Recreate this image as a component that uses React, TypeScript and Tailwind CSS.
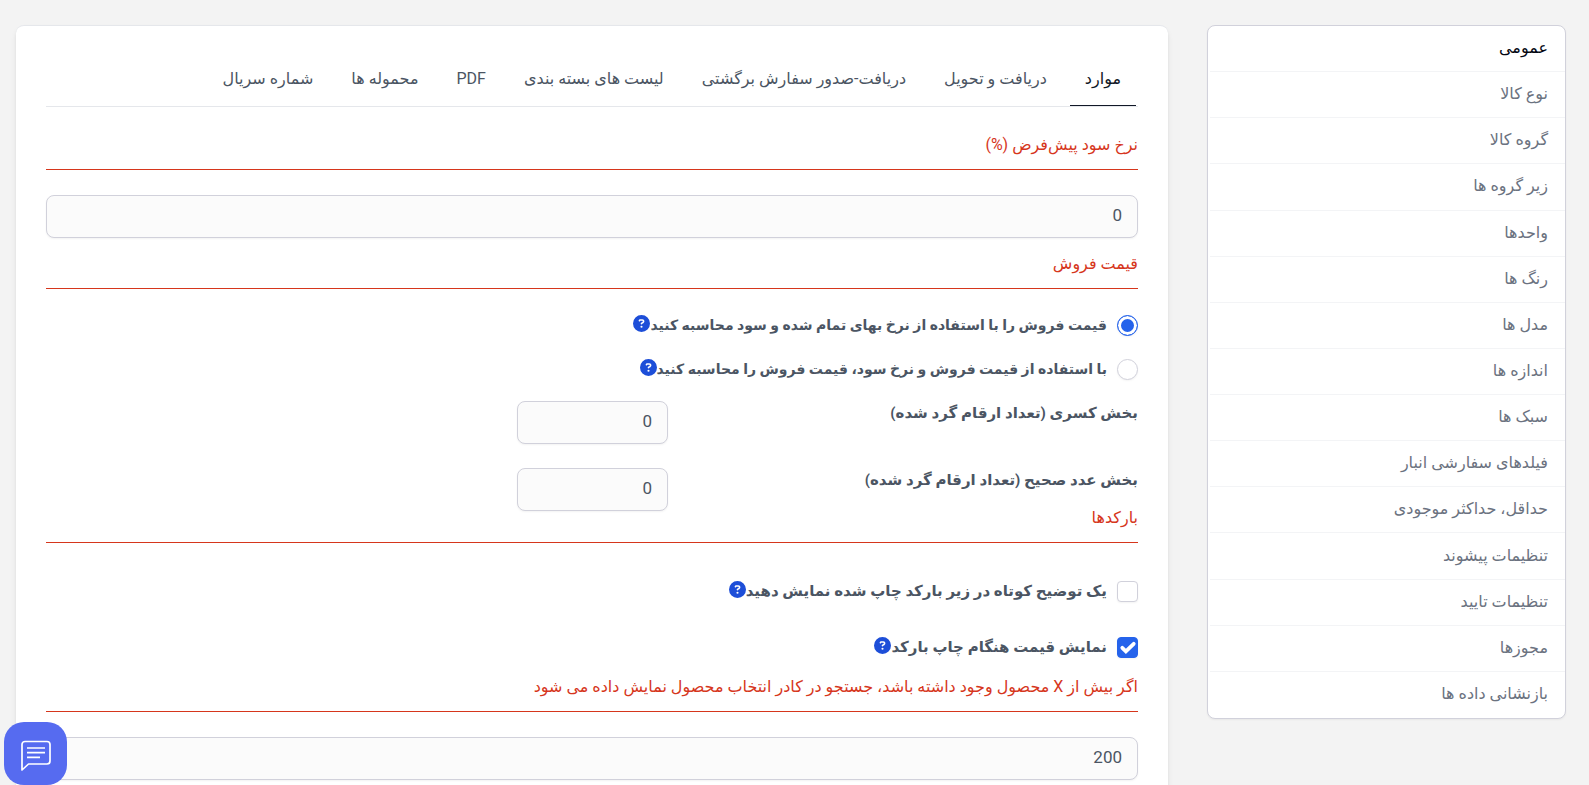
import { useState } from 'react';
import { FaCircleQuestion } from 'react-icons/fa6';

const sideItems = [
  'عمومی',
  'نوع کالا',
  'گروه کالا',
  'زیر گروه ها',
  'واحدها',
  'رنگ ها',
  'مدل ها',
  'اندازه ها',
  'سبک ها',
  'فیلدهای سفارشی انبار',
  'حداقل، حداکثر موجودی',
  'تنظیمات پیشوند',
  'تنظیمات تایید',
  'مجوزها',
  'بازنشانی داده ها',
];

const tabs = [
  'موارد',
  'دریافت و تحویل',
  'دریافت-صدور سفارش برگشتی',
  'لیست های بسته بندی',
  'PDF',
  'محموله ها',
  'شماره سریال',
];

const methods = [
  { id: 'cost', label: 'قیمت فروش را با استفاده از نرخ بهای تمام شده و سود محاسبه کنید' },
  { id: 'price', label: 'با استفاده از قیمت فروش و نرخ سود، قیمت فروش را محاسبه کنید' },
];

const inputClass =
  'block h-[43px] rounded-lg border border-[#d1d1db] bg-[#fbfbfb] px-[15px] pb-1 text-[17px] text-[#4b5563] shadow-xs outline-none';

function SectionTitle({ children }: { children: React.ReactNode }) {
  return (
    <h2 className="border-b border-[#d6361c] pb-3 text-base leading-6 text-[#d6361c]">
      {children}
    </h2>
  );
}

function Help() {
  return (
    <button type="button" aria-label="راهنما" className="mb-1 text-[#1d4ed8]">
      <FaCircleQuestion size={17} />
    </button>
  );
}

type CheckRowProps = {
  id: string;
  label: string;
  checked: boolean;
  onChange: (value: boolean) => void;
};

function CheckRow({ id, label, checked, onChange }: CheckRowProps) {
  return (
    <div className="flex items-center">
      <span className="relative ml-[10px] flex">
        <input
          id={id}
          type="checkbox"
          checked={checked}
          onChange={(e) => onChange(e.target.checked)}
          className="size-[21px] appearance-none rounded-sm border border-[#d1d1db] bg-white shadow-xs checked:border-[#2563eb] checked:bg-[#2563eb]"
        />
        {checked && (
          <svg viewBox="0 0 21 21" fill="none" className="pointer-events-none absolute inset-0 size-[21px]">
            <path d="M5.300 10.800l3.600 3.500L16.700 6.800" stroke="#fff" strokeWidth="3.800" strokeLinecap="round" />
          </svg>
        )}
      </span>
      <label htmlFor={id}>{label}</label>
      <Help />
    </div>
  );
}

export default function App() {
  const [tab, setTab] = useState(0);
  const [method, setMethod] = useState('cost');
  const [showNote, setShowNote] = useState(false);
  const [showPrice, setShowPrice] = useState(true);

  return (
    <div
      dir="rtl"
      className="flex h-screen items-start gap-[39px] overflow-hidden bg-[#f3f3f3] pt-[25px] pr-[23px] pl-4 font-[Roboto,'DejaVu_Sans',sans-serif] text-[#4b5563]"
    >
      {/* Sidebar */}
      <nav className="w-[359px] shrink-0 rounded-lg border border-[#d1d1db] bg-white pl-[2px] shadow-xs">
        <ul className="grid min-h-[692px] auto-rows-fr">
          {sideItems.map((item, i) => (
            <li key={item} className="flex border-b border-[#f3f4f6] last:border-b-0">
              <a
                href="#"
                className={`flex flex-1 items-center px-[17px] pb-px text-base ${i === 0 ? 'text-[#030712]' : 'text-[#6b7280]'}`}
              >
                {item}
              </a>
            </li>
          ))}
        </ul>
      </nav>

      {/* Content */}
      <main className="min-w-0 flex-1 rounded-lg border-t border-[#e5e7eb] bg-white px-[30px] pt-[27px] pb-10 shadow-md">
        <div role="tablist" className="flex gap-2 border-b border-[#e5e7eb] px-[2px]">
          {tabs.map((name, i) => (
            <button
              key={name}
              type="button"
              role="tab"
              aria-selected={tab === i}
              onClick={() => setTab(i)}
              className={`h-[53px] border-b px-[15px] text-base ${tab === i ? 'border-[#111827] text-[#111827]' : 'border-transparent'}`}
            >
              {name}
            </button>
          ))}
        </div>

        <div className="mt-[26px]">
          <SectionTitle>نرخ سود پیش‌فرض (%)</SectionTitle>
        </div>
        <input aria-label="نرخ سود پیش‌فرض" defaultValue="0" className={`mt-[25px] w-full ${inputClass}`} />

        <div className="mt-[14px]">
          <SectionTitle>قیمت فروش</SectionTitle>
        </div>
        <div className="mt-6 flex flex-col gap-5 text-sm leading-6 font-bold">
          {methods.map(({ id, label }) => (
            <div key={id} className="flex h-6 items-center">
              <input
                id={id}
                type="radio"
                name="method"
                checked={method === id}
                onChange={() => setMethod(id)}
                className="ml-[10px] size-[21px] appearance-none rounded-full border border-[#d1d1db] bg-white shadow-xs checked:border-[#2563eb] checked:bg-[#2563eb] checked:inset-ring-3 checked:inset-ring-white"
              />
              <label htmlFor={id}>{label}</label>
              <Help />
            </div>
          ))}
        </div>

        <div className="mt-5 flex flex-col gap-6 text-[15px] leading-6 font-bold">
          <div className="flex items-start">
            <label htmlFor="fraction" className="w-[470px]">بخش کسری (تعداد ارقام گرد شده)</label>
            <input id="fraction" defaultValue="0" className={`w-[151px] font-normal ${inputClass}`} />
          </div>
          <div className="flex items-start">
            <label htmlFor="integer" className="w-[470px]">بخش عدد صحیح (تعداد ارقام گرد شده)</label>
            <input id="integer" defaultValue="0" className={`w-[151px] font-normal ${inputClass}`} />
          </div>
        </div>

        <div className="-mt-[5px]">
          <SectionTitle>بارکدها</SectionTitle>
        </div>
        <div className="mt-9 flex flex-col gap-8 text-[15px] leading-6 font-bold">
          <CheckRow
            id="note"
            label="یک توضیح کوتاه در زیر بارکد چاپ شده نمایش دهید"
            checked={showNote}
            onChange={setShowNote}
          />
          <CheckRow
            id="show-price"
            label="نمایش قیمت هنگام چاپ بارکد"
            checked={showPrice}
            onChange={setShowPrice}
          />
        </div>

        <div className="mt-4">
          <SectionTitle>اگر بیش از X محصول وجود داشته باشد، جستجو در کادر انتخاب محصول نمایش داده می شود</SectionTitle>
        </div>
        <input aria-label="تعداد محصول" defaultValue="200" className={`mt-[25px] w-full ${inputClass}`} />
      </main>

      {/* Chat */}
      <button
        type="button"
        aria-label="گفتگو"
        className="fixed bottom-0 left-1 flex size-[63px] items-center justify-center rounded-[20px] bg-[#566bf0]"
      >
        <svg width="32" height="32" viewBox="0 0 32 32" fill="none" stroke="#fff" strokeLinejoin="round" className="mt-1">
          <path d="M2 30V4.500a3 3 0 0 1 3-3h22a3 3 0 0 1 3 3v16.500a3 3 0 0 1-3 3H8.500z" strokeWidth="1.700" />
          <path d="M7 8h18M7 12.700h18M7 17.300h13" strokeWidth="1.700" />
        </svg>
      </button>
    </div>
  );
}
